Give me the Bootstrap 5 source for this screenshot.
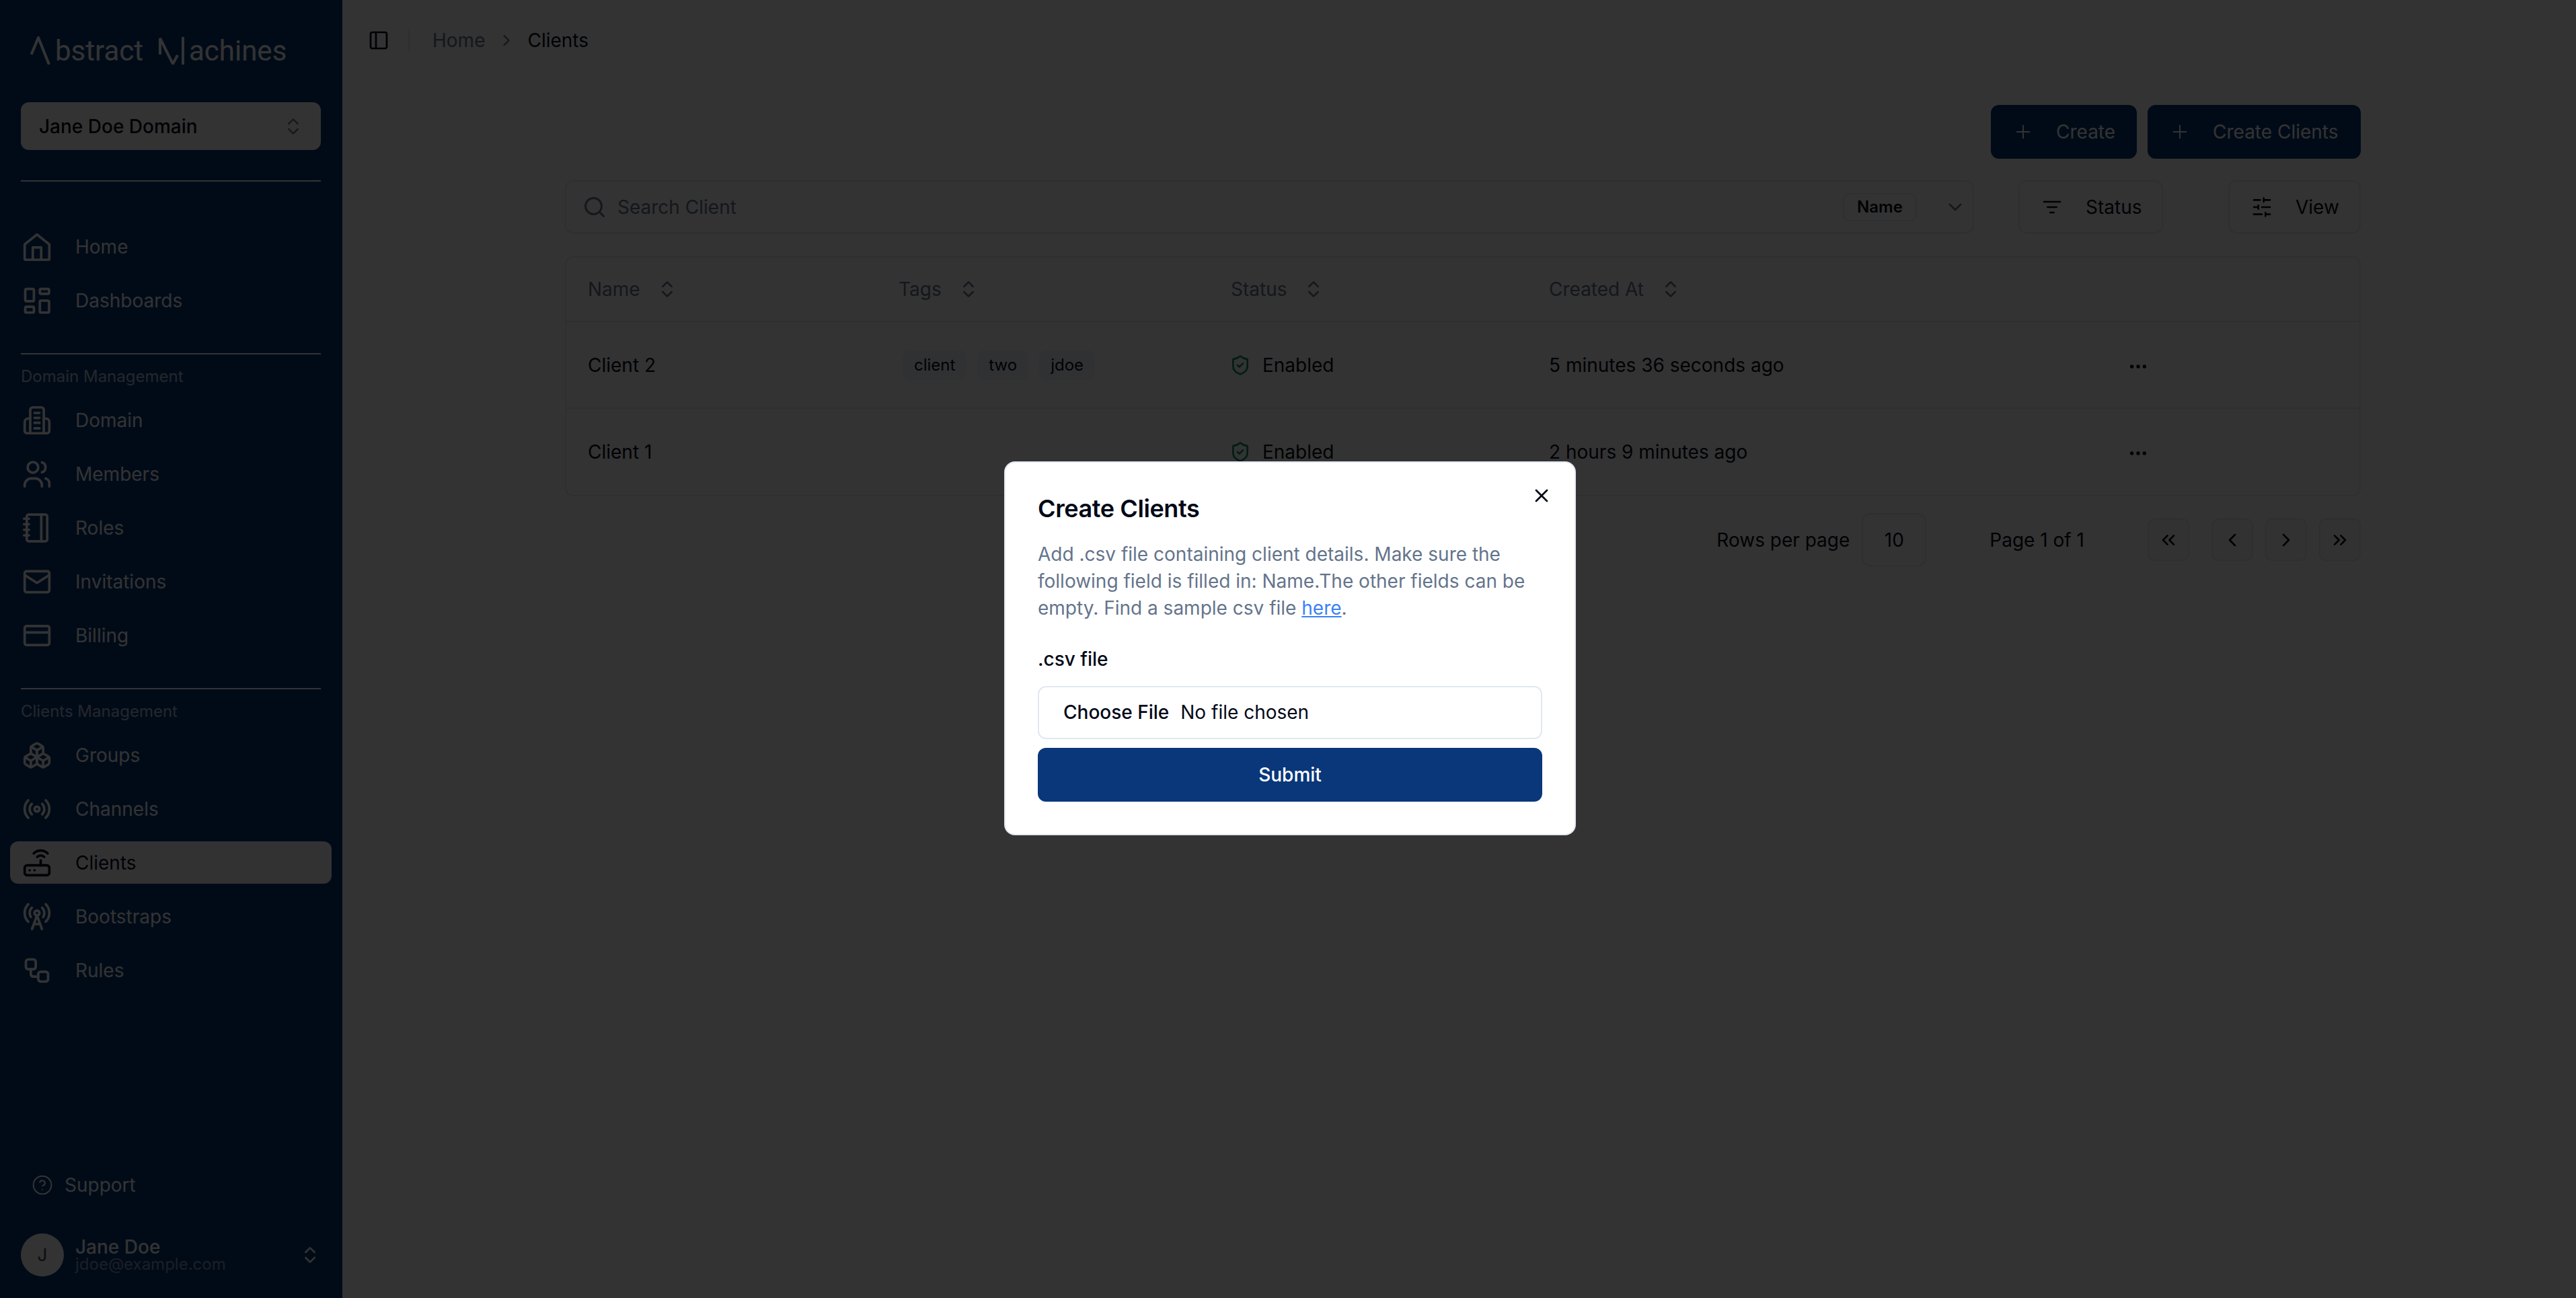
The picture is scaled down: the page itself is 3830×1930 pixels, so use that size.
<!DOCTYPE html>
<html lang="en">
<head>
<meta charset="utf-8">
<title>Clients</title>
<link href="https://cdn.jsdelivr.net/npm/bootstrap@5.3.0/dist/css/bootstrap.min.css" rel="stylesheet">
<style>
html,body{height:100%}
body{font-family:Inter,"Noto Sans",sans-serif;font-size:28px;line-height:40px;color:#020817;background:#fff;overflow:hidden}
svg.ic{fill:none;stroke:currentColor;stroke-width:2;stroke-linecap:round;stroke-linejoin:round;flex:none}
.s32{width:32px;height:32px}
.s44{width:44px;height:44px}
.s36{width:36px;height:36px}
.shell{height:1930px}
.side{width:509px;flex:none;background:#09377a;color:#fff;padding-top:54px}
.brand{height:42px;padding-left:45px;margin-bottom:56px;font-family:Roboto,sans-serif;font-weight:400;font-size:42px;line-height:42px;color:#fff;white-space:nowrap}
.brand svg{fill:none;stroke:#fff;stroke-width:4;flex:none;display:block}
.brand .w1{margin-left:7px;margin-top:1px}
.brand .m1{margin-left:20px}
.brand .w2{margin-left:6px;margin-top:1px}
.dom{margin:0 32px 0 31px;height:71px;background:#fff;color:#020817;border-radius:12px;padding:0 25px 0 27px;font-weight:500}
.dom svg{opacity:.5}
.sep{height:2px;background:rgba(255,255,255,1);margin:0 32px 0 31px}
.sep.a{margin-top:45px;margin-bottom:65px}
.sep.b{margin-top:47px;margin-bottom:17px}
.sec{padding-left:31px;font-size:24px;line-height:32px;height:32px;color:rgba(255,255,255,.7);margin-bottom:17px}
.rows{display:flex;flex-direction:column;gap:17px;margin:0 16px 0 15px}
.rw{height:63px;border-radius:12px;padding-left:18px;display:flex;align-items:center;gap:35px;color:#fff;text-decoration:none}
.rw.on{background:#f8fafc;color:#020817;font-weight:400}
.sup{height:48px;padding-left:47px;gap:17px;margin-bottom:48px}
.sup svg{stroke-width:1.5}
.usr{height:64px;margin:0 0 32px 31px;padding-right:32px}
.ava{width:64px;height:64px;border-radius:50%;background:#fff;color:#334155;font-size:26px;flex:none;margin-right:17px}
.nm{font-weight:500;line-height:28px;color:#fff}
.em{font-size:24px;line-height:24px;color:rgba(255,255,255,.5)}
.main{flex:1;min-width:0}
.top{height:120px;padding-left:38px;color:#020817}
.vb{width:2px;height:32px;background:#e2e8f0;margin:0 34px 0 28px}
.crumb{color:#64748b}
.crumb-x{width:28px;height:28px;margin:0 17px 0 18px;color:#64748b}
.page-body{margin-left:331px;width:2670px;padding-top:36px}
.btn-mk{height:80px;background:#09377a;color:#fff;border:0;border-radius:12px;font-size:28px;line-height:40px;display:flex;align-items:center;padding:0;gap:0}
.btn-mk:hover{background:#09377a;color:#fff}
.b-one{width:217px;padding-left:32px}
.b-two{width:317px;padding-left:32px}
.btn-mk svg{margin-right:33px;stroke-width:1.5}
.tools{margin-top:32px;height:79px}
.srch{flex:1;height:79px;border:2px solid #e2e8f0;border-radius:12px;padding:0 0 0 24px;gap:8px}
.srch .form-control{border:0;padding:0 0 0 0;font-size:28px;height:60px;box-shadow:none;background:transparent}
.srch .form-control::placeholder{color:#64748b}
.srch .gl{color:#64748b}
.pill{width:110px;height:42px;border:2px solid #e2e8f0;border-radius:10px;font-size:24px;line-height:38px;font-weight:600;text-align:center;flex:none;color:#020817}
.chv{margin:0 10px 0 33px;color:#64748b}
.tbtn{height:79px;border:2px solid #e2e8f0;border-radius:12px;background:#fff;color:#020817;font-size:28px;display:flex;align-items:center;padding:0}
.tbtn:hover{background:#fff;color:#020817;border-color:#e2e8f0}
.t-st{width:215px;margin-left:66px;padding-left:32px}
.t-vw{width:197px;margin-left:97px;padding-left:32px}
.tbtn svg{margin-right:34px}
.tblbox{margin-top:34px;border:2px solid #e2e8f0;border-radius:12px;overflow:hidden}
table.grid{table-layout:fixed;margin:0;--bs-table-border-color:#e2e8f0;--bs-table-color:#020817;--bs-table-bg:#fff}
table.grid th{height:95px;padding:0 0 0 32px;vertical-align:middle;font-weight:400;color:#64748b;border-bottom-width:2px}
table.grid td{height:129px;padding:0 0 0 32px;vertical-align:middle;border-bottom-width:2px}
table.grid tr:last-child td{border-bottom:0}
.hd{gap:24px}
.w1c{width:462px}.w2c{width:494px}.w3c{width:473px}.w4c{width:860px}
.hd svg{color:#64748b}
.hd-t svg{color:#64748b}
.col-tags{padding-left:38px!important}
.tg{height:44px;padding:0 17px;background:#f1f5f9;border-radius:10px;font-size:24px;line-height:44px;color:#020817}
.tags{gap:16px}
.ok{color:#0e8a63;margin-right:17px}
.shd{margin-left:-2px}
.pg{margin-top:25px;height:79px}
.sz{width:96px;height:79px;border:2px solid #e2e8f0;border-radius:12px;margin:0 94px 0 18px}
.pb{width:62px;height:63px;border:2px solid #e2e8f0;border-radius:10px;background:#f8fafc;color:#020817;padding:0;display:flex;align-items:center;justify-content:center}
.pb:hover{background:#f8fafc;color:#020817;border-color:#e2e8f0}
.ml-a{margin-left:94px}
.ml-b{margin-left:33px}
.ml-c{margin-left:18px}
.modal-backdrop{--bs-backdrop-opacity:.8}
.dlg{max-width:850px;width:850px;margin:0 auto;min-height:100%;padding-bottom:3px;transform:translateX(3px)!important}
.mbox{border:2px solid #e2e8f0;border-radius:16px;padding:48px;padding-top:48px;height:556px;background:#fff}
.ttl{font-size:36px;line-height:40px;font-weight:600;letter-spacing:-.4px;color:#020817;margin:0 0 28px}
.dsc{color:#64748b;margin:0 0 36px}
.dsc a{color:#3b82f6}
.lbl{font-weight:500;margin:0 0 20px;line-height:40px;color:#020817;display:block}
.xbtn{position:absolute;top:33px;right:33px;background:none;border:0;padding:0;color:#020817;display:flex}
.csvin{height:79px;border:2px solid #e2e8f0;border-radius:12px;padding:0 0 0 24px;font-size:28px;line-height:75px;color:#020817;margin-bottom:13px}
.form-control.csvin::file-selector-button{padding:0;margin:0 17px 0 12px;border:0;background:transparent;font-weight:500;color:#020817;height:75px;font-size:28px}
.sbm{width:100%;height:80px;background:#09377a;color:#fff;border:0;border-radius:12px;font-size:28px;font-weight:500}
.sbm:hover{background:#09377a;color:#fff}
</style>
</head>
<body>
<div class="shell d-flex">
  <aside class="side d-flex flex-column">
    <div class="brand d-flex align-items-start">
      <svg width="30" height="42" viewBox="0 0 30 42"><path d="M1.5 27 12 2l16 40"/></svg>
      <span class="w1">bstract</span>
      <svg class="m1" width="42" height="42" viewBox="0 0 42 42"><path d="M5 27V3l19 38 7-13M39 1v41"/></svg>
      <span class="w2">achines</span>
    </div>
    <div class="dom d-flex align-items-center justify-content-between">
      <span>Jane Doe Domain</span>
      <svg class="ic s32" viewBox="0 0 24 24"><path d="m7 15 5 5 5-5"/><path d="m7 9 5-5 5 5"/></svg>
    </div>
    <div class="sep a"></div>
    <nav class="rows">
      <a class="rw" href="#"><svg class="ic s44" viewBox="0 0 24 24"><path d="M3 22.5h18a1 1 0 0 0 1-1V10L12 2 2 10v11.5a1 1 0 0 0 1 1Z"/><path d="M8.6 22.5v-10h6.8v10"/></svg><span>Home</span></a>
      <a class="rw" href="#"><svg class="ic s44" viewBox="0 0 24 24"><rect x="2.5" y="2.5" width="7" height="10" rx="1"/><rect x="14.3" y="2.5" width="7.5" height="4" rx="1"/><rect x="14.3" y="12" width="7.5" height="9.7" rx="1"/><rect x="2.5" y="17" width="7" height="4.7" rx="1"/></svg><span>Dashboards</span></a>
    </nav>
    <div class="sep b"></div>
    <div class="sec">Domain Management</div>
    <nav class="rows">
      <a class="rw" href="#"><svg class="ic s44" viewBox="0 0 24 24"><path d="M6.5 22.5V3.5a2 2 0 0 1 2-2h7a2 2 0 0 1 2 2v19"/><path d="M6.5 10.5H5a3 3 0 0 0-3 3v7a2 2 0 0 0 2 2h16a2 2 0 0 0 2-2v-7a3 3 0 0 0-3-3h-1.500"/><path d="M10 6h4M10 10h4M10 14h4M10 18.500h4"/></svg><span>Domain</span></a>
      <a class="rw" href="#"><svg class="ic s44" viewBox="0 0 24 24"><circle cx="8.700" cy="6.500" r="4.300"/><path d="M2 22v-1a5.500 5.500 0 0 1 5.500-5.500h3a5.500 5.500 0 0 1 5.500 5.500v1"/><path d="M16 2.500a4.200 4.200 0 0 1 0 8"/><path d="M19 15.500a4 4 0 0 1 3 4V22"/></svg><span>Members</span></a>
      <a class="rw" href="#"><svg class="ic s44" viewBox="0 0 24 24"><rect x="3.700" y="1.200" width="16.600" height="21.600" rx="1.500"/><path d="M15.500 1.200v21.600"/><path d="M1.500 4.500h4M1.500 9h4M1.500 13.500h4M1.500 18h4"/></svg><span>Roles</span></a>
      <a class="rw" href="#"><svg class="ic s44" viewBox="0 0 24 24"><rect x="2" y="3.500" width="20" height="17" rx="1.500"/><path d="m2 6.500 10 6.500 10-6.500"/></svg><span>Invitations</span></a>
      <a class="rw" href="#"><svg class="ic s44" viewBox="0 0 24 24"><rect x="2" y="4.300" width="20" height="15.400" rx="1.500"/><path d="M2 9.500h20"/></svg><span>Billing</span></a>
    </nav>
    <div class="sep b"></div>
    <div class="sec">Clients Management</div>
    <nav class="rows">
      <a class="rw" href="#"><svg class="ic s44" viewBox="0 0 24 24"><path d="M2.970 12.920A2 2 0 0 0 2 14.630v3.240a2 2 0 0 0 .97 1.710l3 1.800a2 2 0 0 0 2.060 0L12 19v-5.500l-5-3-4.030 2.420Z"/><path d="m7 16.500-4.740-2.850"/><path d="m7 16.500 5-3"/><path d="M7 16.500v5.170"/><path d="M12 13.500V19l3.970 2.380a2 2 0 0 0 2.060 0l3-1.800a2 2 0 0 0 .97-1.710v-3.240a2 2 0 0 0-.97-1.710L17 10.500l-5 3Z"/><path d="m17 16.500-5-3"/><path d="m17 16.500 4.740-2.850"/><path d="M17 16.500v5.170"/><path d="M7.970 4.420A2 2 0 0 0 7 6.130v4.370l5 3 5-3V6.130a2 2 0 0 0-.97-1.710l-3-1.800a2 2 0 0 0-2.060 0l-3 1.800Z"/><path d="M12 8 7.260 5.150"/><path d="m12 8 4.740-2.850"/><path d="M12 13.500V8"/></svg><span>Groups</span></a>
      <a class="rw" href="#"><svg class="ic s44" viewBox="0 0 24 24"><path d="M4.900 19.100C1 15.200 1 8.800 4.900 4.900"/><path d="M7.800 16.200c-2.300-2.300-2.300-6.100 0-8.500"/><circle cx="12" cy="12" r="2"/><path d="M16.200 7.800c2.300 2.300 2.300 6.100 0 8.500"/><path d="M19.100 4.900C23 8.800 23 15.100 19.100 19"/></svg><span>Channels</span></a>
      <a class="rw on" href="#"><svg class="ic s44" viewBox="0 0 24 24"><rect x="2" y="14" width="20" height="8" rx="2"/><path d="M6.010 18H6"/><path d="M10.010 18H10"/><path d="M15 10v4"/><path d="M17.840 7.170a4 4 0 0 0-5.660 0"/><path d="M20.660 4.340a8 8 0 0 0-11.310 0"/></svg><span>Clients</span></a>
      <a class="rw" href="#"><svg class="ic s44" viewBox="0 0 24 24"><path d="M4.900 16.100C1 12.200 1 5.800 4.900 1.900"/><path d="M7.800 4.700a6.140 6.140 0 0 0-.8 7.500"/><circle cx="12" cy="9" r="2"/><path d="M16.200 4.800c2 2 2.260 5.110.8 7.470"/><path d="M19.100 1.900a9.960 9.960 0 0 1 0 14.100"/><path d="M9.500 18h5"/><path d="m8 22 4-11 4 11"/></svg><span>Bootstraps</span></a>
      <a class="rw" href="#"><svg class="ic s44" viewBox="0 0 24 24"><rect x="3" y="3" width="8" height="8" rx="2"/><path d="M7 11v4a2 2 0 0 0 2 2h4"/><rect x="13" y="13" width="8" height="8" rx="2"/></svg><span>Rules</span></a>
    </nav>
    <div class="mt-auto">
      <div class="sup d-flex align-items-center">
        <svg class="ic s32" viewBox="0 0 24 24"><circle cx="12" cy="12" r="10"/><path d="M9.090 9a3 3 0 0 1 5.830 1c0 2-3 3-3 3"/><path d="M12 17h.01"/></svg>
        <span>Support</span>
      </div>
      <div class="usr d-flex align-items-center">
        <div class="ava d-flex align-items-center justify-content-center">J</div>
        <div class="flex-grow-1">
          <div class="nm">Jane Doe</div>
          <div class="em">jdoe@example.com</div>
        </div>
        <svg class="ic s32" viewBox="0 0 24 24"><path d="m7 15 5 5 5-5"/><path d="m7 9 5-5 5 5"/></svg>
      </div>
    </div>
  </aside>
  <main class="main">
    <header class="top d-flex align-items-center">
      <svg class="ic s32" viewBox="0 0 24 24"><rect x="3" y="3" width="18" height="18" rx="2"/><path d="M9 3v18"/></svg>
      <div class="vb"></div>
      <span class="crumb">Home</span>
      <svg class="ic crumb-x" viewBox="0 0 24 24"><path d="m9 18 6-6-6-6"/></svg>
      <span>Clients</span>
    </header>
    <div class="page-body">
      <div class="d-flex justify-content-end gap-3">
        <button class="btn btn-mk b-one" type="button"><svg class="ic s32" viewBox="0 0 24 24"><path d="M5 12h14"/><path d="M12 5v14"/></svg>Create</button>
        <button class="btn btn-mk b-two" type="button"><svg class="ic s32" viewBox="0 0 24 24"><path d="M5 12h14"/><path d="M12 5v14"/></svg>Create Clients</button>
      </div>
      <div class="tools d-flex">
        <div class="srch d-flex align-items-center">
          <svg class="ic s36 gl" viewBox="0 0 24 24"><circle cx="11" cy="11" r="8"/><path d="m21 21-4.300-4.300"/></svg>
          <input class="form-control ms-2" type="text" placeholder="Search Client">
          <span class="pill">Name</span>
          <svg class="ic s32 chv" viewBox="0 0 24 24"><path d="m6 9 6 6 6-6"/></svg>
        </div>
        <button class="btn tbtn t-st" type="button"><svg class="ic s32" viewBox="0 0 24 24"><path d="M3 6h18"/><path d="M7 12h10"/><path d="M10 18h4"/></svg>Status</button>
        <button class="btn tbtn t-vw" type="button"><svg class="ic s32" viewBox="0 0 24 24"><path d="M21 4h-7M10 4H3M21 12h-9M8 12H3M21 20h-5M12 20H3M14 2v4M8 10v4M16 18v4"/></svg>View</button>
      </div>
      <div class="tblbox">
        <table class="table grid">
          <colgroup><col class="w1c"><col class="w2c"><col class="w3c"><col class="w4c"><col></colgroup>
          <thead>
            <tr>
              <th><div class="hd d-flex align-items-center"><span>Name</span><svg class="ic s32" viewBox="0 0 24 24"><path d="m7 15 5 5 5-5"/><path d="m7 9 5-5 5 5"/></svg></div></th>
              <th><div class="hd d-flex align-items-center"><span>Tags</span><svg class="ic s32" viewBox="0 0 24 24"><path d="m7 15 5 5 5-5"/><path d="m7 9 5-5 5 5"/></svg></div></th>
              <th><div class="hd d-flex align-items-center"><span>Status</span><svg class="ic s32" viewBox="0 0 24 24"><path d="m7 15 5 5 5-5"/><path d="m7 9 5-5 5 5"/></svg></div></th>
              <th><div class="hd d-flex align-items-center"><span>Created At</span><svg class="ic s32" viewBox="0 0 24 24"><path d="m7 15 5 5 5-5"/><path d="m7 9 5-5 5 5"/></svg></div></th>
              <th></th>
            </tr>
          </thead>
          <tbody>
            <tr>
              <td>Client 2</td>
              <td class="col-tags"><div class="tags d-flex"><span class="tg">client</span><span class="tg">two</span><span class="tg">jdoe</span></div></td>
              <td><div class="d-flex align-items-center"><svg class="ic s32 ok shd" viewBox="0 0 24 24"><path d="M20 13c0 5-3.500 7.500-7.660 8.950a1 1 0 0 1-.67-.01C7.500 20.500 4 18 4 13V6a1 1 0 0 1 1-1c2 0 4.500-1.200 6.240-2.720a1.170 1.170 0 0 1 1.520 0C14.510 3.810 17 5 19 5a1 1 0 0 1 1 1z"/><path d="m9 12 2 2 4-4"/></svg><span>Enabled</span></div></td>
              <td>5 minutes 36 seconds ago</td>
              <td><svg class="ic s32" viewBox="0 0 24 24"><circle cx="12" cy="12" r="1"/><circle cx="19" cy="12" r="1"/><circle cx="5" cy="12" r="1"/></svg></td>
            </tr>
            <tr>
              <td>Client 1</td>
              <td></td>
              <td><div class="d-flex align-items-center"><svg class="ic s32 ok shd" viewBox="0 0 24 24"><path d="M20 13c0 5-3.500 7.500-7.660 8.950a1 1 0 0 1-.67-.01C7.500 20.500 4 18 4 13V6a1 1 0 0 1 1-1c2 0 4.500-1.200 6.240-2.720a1.170 1.170 0 0 1 1.520 0C14.510 3.810 17 5 19 5a1 1 0 0 1 1 1z"/><path d="m9 12 2 2 4-4"/></svg><span>Enabled</span></div></td>
              <td>2 hours 9 minutes ago</td>
              <td><svg class="ic s32" viewBox="0 0 24 24"><circle cx="12" cy="12" r="1"/><circle cx="19" cy="12" r="1"/><circle cx="5" cy="12" r="1"/></svg></td>
            </tr>
          </tbody>
        </table>
      </div>
      <div class="pg d-flex justify-content-end align-items-center">
        <span>Rows per page</span>
        <div class="sz d-flex align-items-center justify-content-center">10</div>
        <span>Page 1 of 1</span>
        <button class="btn pb ml-a" type="button" aria-label="First"><svg class="ic s32" viewBox="0 0 24 24"><path d="m11 17-5-5 5-5"/><path d="m18 17-5-5 5-5"/></svg></button>
        <button class="btn pb ml-b" type="button" aria-label="Previous"><svg class="ic s32" viewBox="0 0 24 24"><path d="m15 18-6-6 6-6"/></svg></button>
        <button class="btn pb ml-c" type="button" aria-label="Next"><svg class="ic s32" viewBox="0 0 24 24"><path d="m9 18 6-6-6-6"/></svg></button>
        <button class="btn pb ml-c" type="button" aria-label="Last"><svg class="ic s32" viewBox="0 0 24 24"><path d="m6 17 5-5-5-5"/><path d="m13 17 5-5-5-5"/></svg></button>
      </div>
    </div>
  </main>
</div>

<div class="modal-backdrop show"></div>
<div class="modal d-block" tabindex="-1">
  <div class="modal-dialog modal-dialog-centered dlg">
    <div class="modal-content mbox position-relative">
      <button class="xbtn" type="button" aria-label="Close"><svg class="ic s32" viewBox="0 0 24 24"><path d="M18 6 6 18"/><path d="m6 6 12 12"/></svg></button>
      <h2 class="ttl">Create Clients</h2>
      <p class="dsc">Add .csv file containing client details. Make sure the following field is filled in: Name.The other fields can be empty. Find a sample csv file <a href="#">here</a>.</p>
      <label class="lbl" for="csv">.csv file</label>
      <input class="form-control csvin" id="csv" type="file">
      <button class="btn sbm" type="button">Submit</button>
    </div>
  </div>
</div>
<script src="https://cdn.jsdelivr.net/npm/bootstrap@5.3.0/dist/js/bootstrap.bundle.min.js"></script>
</body>
</html>
